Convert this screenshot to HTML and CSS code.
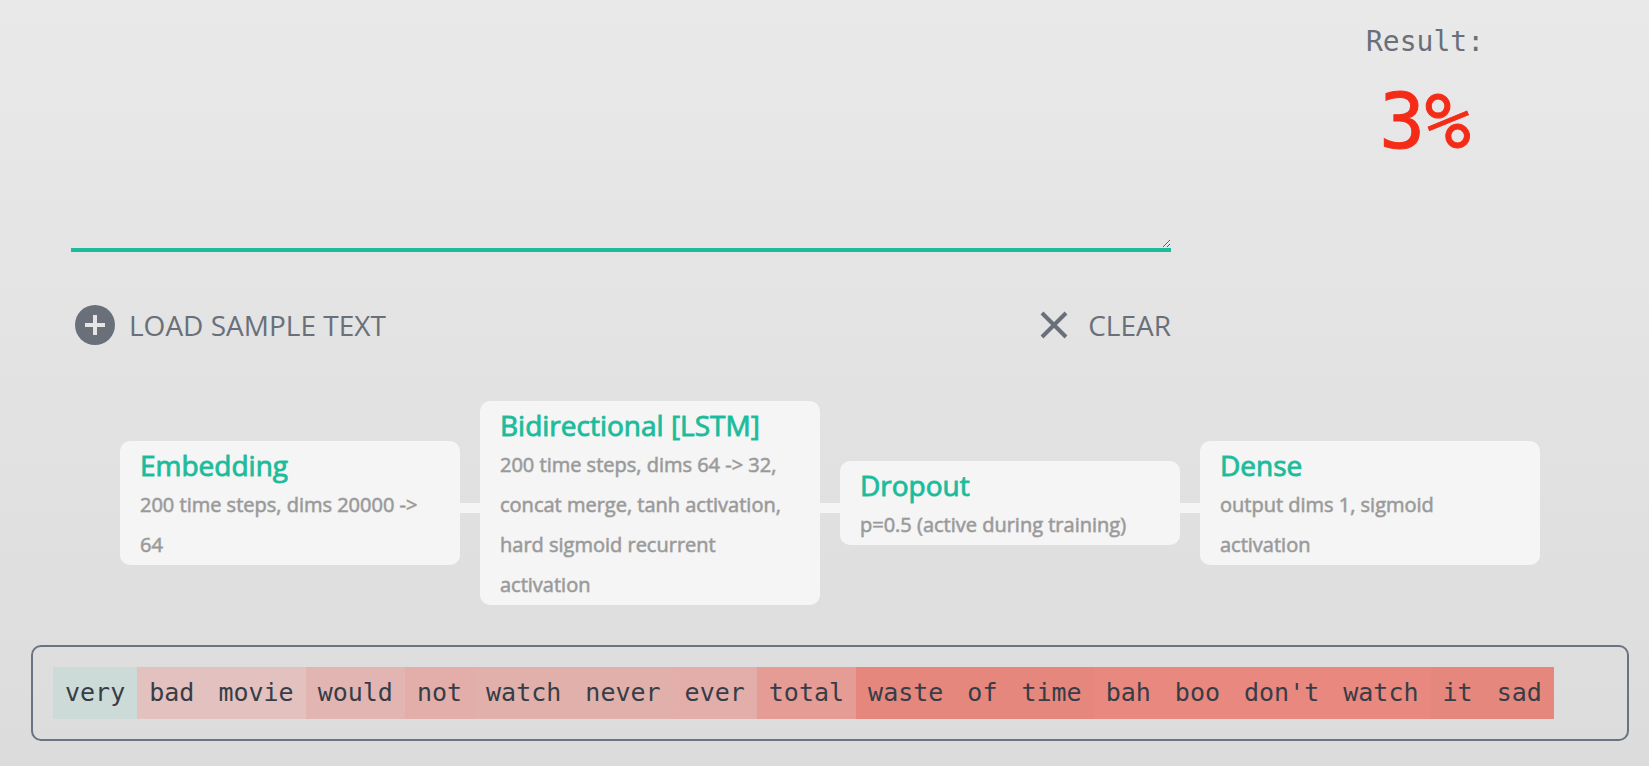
FILE: index.html
```html
<!DOCTYPE html>
<html lang="en">
<head>
<meta charset="utf-8">
<title>Bidirectional LSTM sentiment</title>
<link rel="stylesheet" href="styles.css">
</head>
<body>
<main class="demo">
  <section class="top">
    <div class="entry">
      <textarea class="input-text" aria-label="Input text"></textarea>
      <div class="actions">
        <button class="action" type="button">
          <svg class="icon icon-add" viewBox="0 0 40 40" aria-hidden="true"><circle cx="20" cy="20" r="20" fill="#69707a"/><path d="M20 10v20M10 20h20" stroke="#e5e5e5" stroke-width="4"/></svg>
          <span>LOAD SAMPLE TEXT</span>
        </button>
        <button class="action action-clear" type="button">
          <svg class="icon icon-close" viewBox="0 0 28 28" aria-hidden="true"><path d="M2 2l24 24M26 2L2 26" stroke="#69707a" stroke-width="4"/></svg>
          <span>CLEAR</span>
        </button>
      </div>
    </div>
    <div class="result">
      <div class="result-label">Result:</div>
      <output class="result-value">3%</output>
    </div>
  </section>
  <section class="layers">
    <article class="layer"><h2>Embedding</h2><p>200 time steps, dims 20000 -&gt; 64</p></article>
    <div class="link"></div>
    <article class="layer"><h2>Bidirectional [LSTM]</h2><p>200 time steps, dims 64 -&gt; 32, concat merge, tanh activation, hard sigmoid recurrent activation</p></article>
    <div class="link"></div>
    <article class="layer"><h2>Dropout</h2><p>p=0.5 (active during training)</p></article>
    <div class="link"></div>
    <article class="layer"><h2>Dense</h2><p>output dims 1, sigmoid activation</p></article>
  </section>
  <section class="words">
    <span class="word good">very</span><span class="word s1">bad</span><span class="word s1">movie</span><span class="word s2">would</span><span class="word s3">not</span><span class="word s3b">watch</span><span class="word s3b">never</span><span class="word s3">ever</span><span class="word s4">total</span><span class="word s5">waste</span><span class="word s5">of</span><span class="word s5">time</span><span class="word s6">bah</span><span class="word s6">boo</span><span class="word s6">don't</span><span class="word s6">watch</span><span class="word s5">it</span><span class="word s5">sad</span>
  </section>
</main>
</body>
</html>
```
FILE: styles.css
```css
* { box-sizing: border-box; }
html { min-height: 100%; background: linear-gradient(#e9e9e9, #dcdcdc); }
body { margin: 0; font-family: "Open Sans", sans-serif; color: #69707a; }
.demo { display: flex; flex-direction: column; padding: 0 20px 20px 31px; }
.top { display: grid; grid-template-columns: 1100fr 458fr; padding-left: 40px; }
.entry { display: flex; flex-direction: column; }
.input-text {
  display: block; width: 100%; height: 252px; padding: 10px;
  border: 0; border-bottom: 4px solid #1bbc9b; border-radius: 0;
  background: transparent; outline: 0; resize: vertical;
  font-family: "DejaVu Sans Mono", monospace; font-size: 25px; color: #333b48;
}
.actions { display: flex; justify-content: space-between; padding: 53px 0 0 4px; }
.action {
  display: flex; align-items: center; gap: 14px; height: 40px; padding: 0;
  border: 0; background: none; color: #69707a; cursor: pointer;
  font-family: "Open Sans", sans-serif; font-size: 28px; font-weight: 400; line-height: 40px;
}
.action-clear { gap: 20px; }
.icon { display: block; flex: none; }
.icon-add { width: 40px; height: 40px; }
.icon-close { width: 28px; height: 28px; }
.result {
  display: flex; flex-direction: column; align-items: center;
  padding: 20px 0 0 30px; margin-right: -20px;
  font-family: "DejaVu Sans Mono", monospace;
}
.result-label { font-size: 28px; line-height: 44px; }
.result-value { font-size: 76px; line-height: 116px; color: #f42c17; -webkit-text-stroke: 1px #f42c17; }
.layers { display: flex; align-items: center; padding: 56px 89px 40px; }
.layer {
  flex: 1 1 0; min-width: 0; padding: 4px 20px 0;
  border-radius: 10px; background: #f5f5f5;
}
.layer h2 {
  margin: 0; font-size: 28px; font-weight: 400; line-height: 40px; color: #1bbc9b;
  -webkit-text-stroke: 1px rgba(27, 188, 155, 0.9);
}
.layer p {
  margin: 0; font-size: 20px; line-height: 40px; color: #999;
  -webkit-text-stroke: 1px rgba(153, 153, 153, 0.6);
}
.link { flex: 0 0 20px; height: 10px; margin-top: 10px; background: #f5f5f5; }
.words {
  display: flex; flex-wrap: wrap; padding: 20px;
  border: 2px solid #6b7380; border-radius: 10px;
  font-family: "DejaVu Sans Mono", monospace; font-size: 25px; line-height: 52px; color: #373d47;
}
.word { padding: 0 12px; }
.good { background: #ccdbd7; }
.s1 { background: #e2c1be; }
.s2 { background: #e2b5b2; }
.s3 { background: #e3aeaa; }
.s3b { background: #e1b0ab; }
.s4 { background: #e49c94; }
.s5 { background: #e5877c; }
.s6 { background: #e9887e; }
```
